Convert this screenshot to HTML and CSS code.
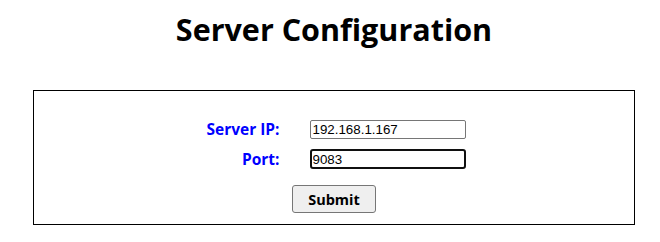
FILE: index.html
```html
<!DOCTYPE html>
<html lang="en">
<head>
    <meta charset="UTF-8">
    <meta name="viewport" content="width=device-width, initial-scale=1.0">
    <title>Server Configuration</title>
    <link rel="stylesheet" href="styles.css">
</head>
<body>
    <h1>Server Configuration</h1>
    <div class="config-box">
        <form class="config-form">
            <div class="fields">
                <label for="serverIp">Server IP:</label>
                <input type="text" id="serverIp" value="192.168.1.167">
                <label for="port">Port:</label>
                <input type="text" id="port" class="focused" value="9083">
            </div>
            <button type="button" class="submit">Submit</button>
        </form>
    </div>
</body>
</html>
```

FILE: styles.css
```css
body {
    margin: 8px;
    font-family: 'Open Sans', 'Noto Sans', sans-serif;
    background-color: #fff;
}

h1 {
    font-size: 30.5px;
    font-weight: bold;
    text-align: center;
    line-height: 42px;
    margin: 0 0 40px 8px;
    color: #000;
}

.config-box {
    width: 602px;
    margin-left: 25px;
    border: 1px solid #000;
    box-sizing: border-box;
    padding: 29px 0 11px;
}

.config-form {
    display: flex;
    flex-direction: column;
    align-items: center;
}

.fields {
    display: grid;
    grid-template-columns: 79px 156px;
    column-gap: 30px;
    row-gap: 10px;
    align-items: center;
    margin-right: 2px;
}

label {
    color: #0000ff;
    font-weight: bold;
    font-size: 15.5px;
    text-align: right;
    line-height: 19px;
    white-space: nowrap;
}

input {
    width: 156px;
    height: 19px;
    box-sizing: border-box;
    border: 1px solid #767676;
    border-radius: 2px;
    padding: 1px 2px;
    font-family: 'Liberation Sans', Arial, sans-serif;
    font-size: 13.33px;
    color: #000;
}

input.focused {
    border: 2px solid #101010;
    border-radius: 3px;
    height: 20px;
    padding: 0 1px;
}

.submit {
    margin-top: 16px;
    width: 84px;
    height: 28px;
    background-color: #efefef;
    border: 1px solid #767676;
    border-radius: 3px;
    font-family: 'Open Sans', 'Noto Sans', sans-serif;
    font-weight: bold;
    font-size: 14.5px;
    color: #000;
    padding: 0;
}
```
